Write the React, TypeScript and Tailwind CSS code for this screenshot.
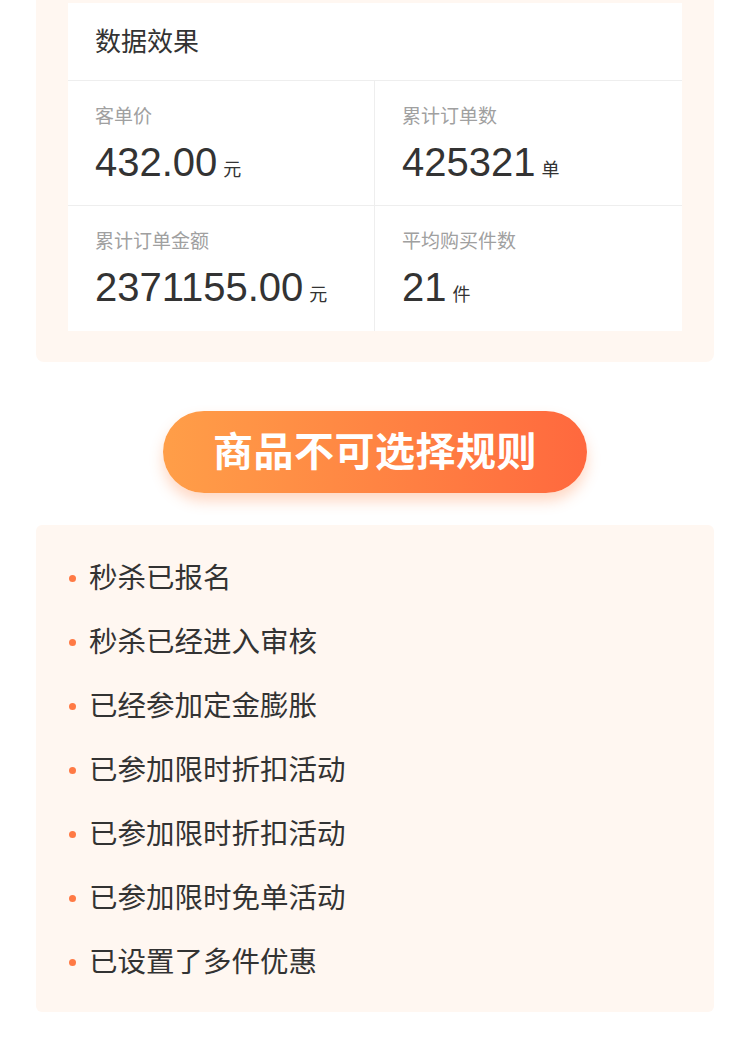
const font = { fontFamily: '"Liberation Sans", "Noto Sans CJK SC", sans-serif' };

const stats = [
  { label: '客单价', value: '432.00', unit: '元' },
  { label: '累计订单数', value: '425321', unit: '单' },
  { label: '累计订单金额', value: '2371155.00', unit: '元' },
  { label: '平均购买件数', value: '21', unit: '件' },
];

const rules = [
  '秒杀已报名',
  '秒杀已经进入审核',
  '已经参加定金膨胀',
  '已参加限时折扣活动',
  '已参加限时折扣活动',
  '已参加限时免单活动',
  '已设置了多件优惠',
];

export default function App() {
  return (
    <div className="w-[750px] h-[1060px] bg-white px-[36px] overflow-hidden" style={font}>
      <div className="bg-[#fff7f1] rounded-b-lg pt-[3px] pb-[31px] px-[32px]">
        <div className="bg-white">
          <div className="h-[78px] flex items-center pl-[27px] pt-[2px] text-[26px] text-[#333] border-b border-[#eeeeee]">
            数据效果
          </div>
          <div className="grid grid-cols-2">
            {stats.map((s, i) => (
              <div
                key={i}
                className={`h-[125px] pl-[27px] pt-[24px] ${i % 2 === 0 ? 'border-r border-[#eeeeee]' : ''} ${i < 2 ? 'border-b border-[#eeeeee]' : ''}`}
              >
                <div className="text-[19px] leading-[24px] text-[#a0a0a0]">{s.label}</div>
                <div className="flex items-baseline mt-[11px] text-[#333]">
                  <span className="text-[40px] leading-[44px]">{s.value}</span>
                  <span className="text-[18px] ml-[6px]">{s.unit}</span>
                </div>
              </div>
            ))}
          </div>
        </div>
      </div>

      <div className="flex justify-center mt-[49px]">
        <div className="w-[424px] h-[82px] rounded-full bg-gradient-to-r from-[#ff9e48] to-[#ff683e] shadow-[0_8px_14px_rgba(255,125,60,0.3)] flex items-center justify-center text-white text-[40px] font-bold tracking-[0.5px]">
          商品不可选择规则
        </div>
      </div>

      <div className="mt-[32px] bg-[#fff7f1] rounded-md pt-[21px] pb-[18px] pl-[33px]">
        {rules.map((r, i) => (
          <div key={i} className="h-[64px] flex items-center">
            <span className="w-[7px] h-[7px] rounded-full bg-[#ff7a45] mr-[13px]" />
            <span className="text-[28.5px] text-[#333]">{r}</span>
          </div>
        ))}
      </div>
    </div>
  );
}
